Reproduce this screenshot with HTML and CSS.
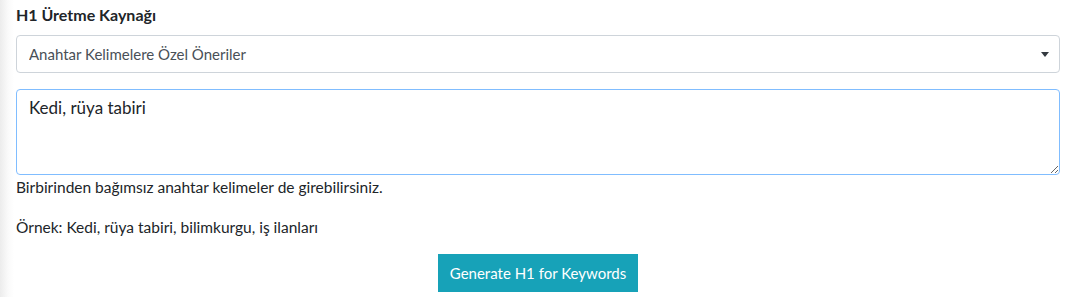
FILE: index.html
```html
<!DOCTYPE html>
<html lang="tr">
<head>
    <meta charset="UTF-8">
    <meta name="viewport" content="width=device-width, initial-scale=1.0">
    <title>H1 Generator</title>
    <link rel="stylesheet" href="styles.css">
</head>
<body>
    <div class="container">
        <form onsubmit="return false;">
            <div class="form-group">
                <label for="source">H1 Üretme Kaynağı</label>
                <div class="select-wrap">
                    <select id="source" class="form-control">
                        <option>Anahtar Kelimelere Özel Öneriler</option>
                    </select>
                    <span class="caret"></span>
                </div>
            </div>
            <div class="form-group">
                <textarea id="keywords" class="form-control focused" rows="3">Kedi, rüya tabiri</textarea>
                <p class="help">Birbirinden bağımsız anahtar kelimeler de girebilirsiniz.</p>
                <p class="help">Örnek: Kedi, rüya tabiri, bilimkurgu, iş ilanları</p>
            </div>
            <div class="actions">
                <button type="submit" class="btn-info">Generate H1 for Keywords</button>
            </div>
        </form>
    </div>
</body>
</html>
```

FILE: styles.css
```css
body {
    margin: 0;
    font-family: Lato, "Open Sans", sans-serif;
    font-size: 16px;
    line-height: 24px;
    color: #212529;
    background: linear-gradient(to right, #ececec, #fafafa 8px, #ffffff 14px);
}
.container {
    padding: 3px 15px 0 16px;
}
.form-group {
    margin-bottom: 16px;
}
label {
    display: block;
    font-weight: bold;
    font-size: 16px;
    margin-bottom: 8px;
}
.form-control {
    display: block;
    width: 100%;
    box-sizing: border-box;
    font-family: inherit;
    font-size: 15px;
    line-height: 24px;
    color: #495057;
    background: #fff;
    border: 1px solid #ced4da;
    border-radius: 4px;
    padding: 6px 12px;
}
select.form-control {
    height: 38px;
    appearance: none;
    -webkit-appearance: none;
}
.select-wrap {
    position: relative;
}
.caret {
    position: absolute;
    right: 11px;
    top: 17px;
    border-left: 4px solid transparent;
    border-right: 4px solid transparent;
    border-top: 5px solid #343a40;
    pointer-events: none;
}
textarea.form-control {
    height: 86px;
    resize: vertical;
    font-size: 17px;
    color: #212529;
}
.focused {
    border-color: #80bdff;
    outline: none;
}
.help {
    margin: 0 0 16px 0;
    font-size: 15.5px;
}
.actions {
    text-align: center;
    margin-top: -1px;
}
.btn-info {
    font-family: inherit;
    font-size: 15px;
    line-height: 24px;
    color: #fff;
    background: #17a2b8;
    border: none;
    border-radius: 0;
    padding: 7px 12px;
    cursor: pointer;
}
```
